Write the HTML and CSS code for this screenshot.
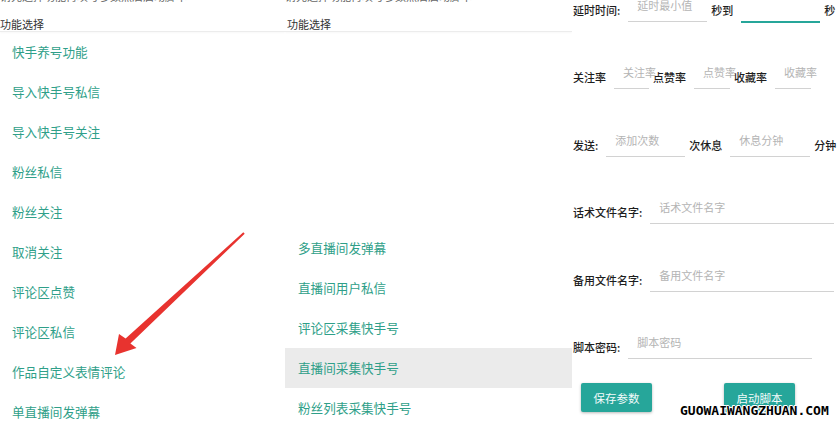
FILE: index.html
```html
<!DOCTYPE html>
<html lang="zh-CN">
<head>
  <meta charset="UTF-8">
  <meta name="viewport" content="width=device-width, initial-scale=1.0">
  <title>快手脚本</title>
  <link rel="stylesheet" href="styles.css">
</head>
<body>
  <div class="screens">
    <div class="panel menu menu-left">
      <div class="hint"><span>请先选择功能再填写参数然后启动脚本</span></div>
      <div class="menu-title">功能选择</div>
      <ul class="menu-list">
        <li>快手养号功能</li>
        <li>导入快手号私信</li>
        <li>导入快手号关注</li>
        <li>粉丝私信</li>
        <li>粉丝关注</li>
        <li>取消关注</li>
        <li>评论区点赞</li>
        <li>评论区私信</li>
        <li>作品自定义表情评论</li>
        <li>单直播间发弹幕</li>
      </ul>
    </div>

    <div class="panel menu menu-mid">
      <div class="hint"><span>请先选择功能再填写参数然后启动脚本</span></div>
      <div class="menu-title">功能选择</div>
      <ul class="menu-list">
        <li class="ghost"></li>
        <li class="ghost"></li>
        <li class="ghost"></li>
        <li class="ghost"></li>
        <li class="ghost"></li>
        <li>多直播间发弹幕</li>
        <li>直播间用户私信</li>
        <li>评论区采集快手号</li>
        <li class="active">直播间采集快手号</li>
        <li>粉丝列表采集快手号</li>
      </ul>
    </div>

    <div class="panel settings">
      <div class="form">
        <div class="row">
          <span class="label">延时时间:</span>
          <div class="field w79"><span class="ph">延时最小值</span></div>
          <span class="label">秒到</span>
          <div class="field w79 focused"></div>
          <span class="label">秒</span>
        </div>
        <div class="row">
          <span class="label">关注率</span>
          <div class="field w35"><span class="ph">关注率</span></div>
          <span class="label">点赞率</span>
          <div class="field w36"><span class="ph">点赞率</span></div>
          <span class="label">收藏率</span>
          <div class="field w36"><span class="ph">收藏率</span></div>
        </div>
        <div class="row">
          <span class="label">发送:</span>
          <div class="field w79"><span class="ph">添加次数</span></div>
          <span class="label">次休息</span>
          <div class="field w80"><span class="ph">休息分钟</span></div>
          <span class="label">分钟</span>
        </div>
        <div class="row">
          <span class="label">话术文件名字:</span>
          <div class="field w184"><span class="ph">话术文件名字</span></div>
        </div>
        <div class="row">
          <span class="label">备用文件名字:</span>
          <div class="field w184"><span class="ph">备用文件名字</span></div>
        </div>
        <div class="row">
          <span class="label">脚本密码:</span>
          <div class="field w184"><span class="ph">脚本密码</span></div>
        </div>
      </div>
      <div class="actions">
        <button class="btn">保存参数</button>
        <button class="btn">启动脚本</button>
      </div>
    </div>
  </div>

  <svg class="arrow" width="840" height="426" viewBox="0 0 840 426">
    <polygon points="115,355 119,334 125.6,338.5 243.3,232.3 244.7,233.7 130.4,343.5 136.5,348" fill="#e8332f"/>
  </svg>

  <div class="watermark">GUOWAIWANGZHUAN.COM</div>
</body>
</html>
```

FILE: styles.css
```css
body {
  margin: 0;
  width: 840px;
  height: 426px;
  overflow: hidden;
  position: relative;
  background: #fff;
  font-family: "Noto Sans CJK SC", "Noto Sans", sans-serif;
  color: #222;
}

.screens {
  display: flex;
  height: 426px;
}

.panel {
  flex: none;
  overflow: hidden;
}

.menu-left {
  width: 285px;
}

.menu-mid {
  width: 287px;
}

.settings {
  width: 268px;
}

/* top hint line, scrolled almost out of view */
.hint {
  height: 6px;
  overflow: hidden;
}

.hint span {
  display: block;
  margin-top: -11px;
  font-size: 11px;
  line-height: 14px;
  color: #666;
  white-space: nowrap;
}

.menu-title {
  box-sizing: border-box;
  height: 26px;
  padding-top: 11px;
  font-size: 11px;
  line-height: 14px;
  color: #333;
  border-bottom: 1px solid #ececec;
  box-shadow: 0 1px 2px rgba(0, 0, 0, 0.03);
}

.menu-mid .menu-title {
  padding-left: 2px;
}

.menu-list {
  list-style: none;
  margin: 0;
  padding: 0;
}

.menu-list li {
  height: 40px;
  line-height: 40px;
  padding-left: 12px;
  font-size: 12.6px;
  color: #2f9f89;
  white-space: nowrap;
}

.menu-mid .menu-list {
  margin-top: -4px;
}

.menu-mid .menu-list li {
  padding-left: 13px;
}

.menu-list li.active {
  background: #ebebeb;
}

/* settings form */
.form {
  margin-top: -24px;
}

.row {
  display: flex;
  align-items: center;
  height: 67.5px;
  padding-left: 1px;
}

.label {
  font-size: 11px;
  line-height: 14px;
  font-weight: 500;
  color: #1e1e1e;
  white-space: nowrap;
}

.field {
  flex: none;
  box-sizing: border-box;
  height: 24px;
  margin: 0 4px 0 8px;
  border-bottom: 1px solid #d2d2d2;
}

.field.focused {
  border-bottom: 2px solid #26a69a;
  height: 25px;
  margin-top: 1px;
}

.ph {
  display: block;
  padding-left: 9px;
  font-size: 11px;
  line-height: 14px;
  color: #b4b4b4;
  white-space: nowrap;
}

.w35 { width: 35px; }
.w36 { width: 36px; }
.w79 { width: 79px; }
.w80 { width: 80px; }
.w184 { width: 184px; }

.actions {
  display: flex;
  gap: 72px;
  margin-top: 2px;
  padding-left: 9px;
}

.btn {
  width: 71px;
  height: 29px;
  padding: 0;
  border: none;
  border-radius: 2px;
  background: #26a69a;
  color: #f2fbfa;
  font-family: "Noto Sans CJK SC", sans-serif;
  font-size: 11.5px;
  box-shadow: 0 1px 3px rgba(0, 0, 0, 0.28);
}

/* overlays */
.arrow {
  position: absolute;
  top: 0;
  left: 0;
  pointer-events: none;
}

.watermark {
  position: absolute;
  left: 680px;
  top: 403px;
  font-family: "DejaVu Sans Mono", monospace;
  font-weight: bold;
  font-size: 13px;
  line-height: 16px;
  color: #000;
  text-shadow: 1px 0 #fff, -1px 0 #fff, 0 1px #fff, 0 -1px #fff, 1px 1px #fff, -1px -1px #fff, 0.4px 0 #000;
}
```
